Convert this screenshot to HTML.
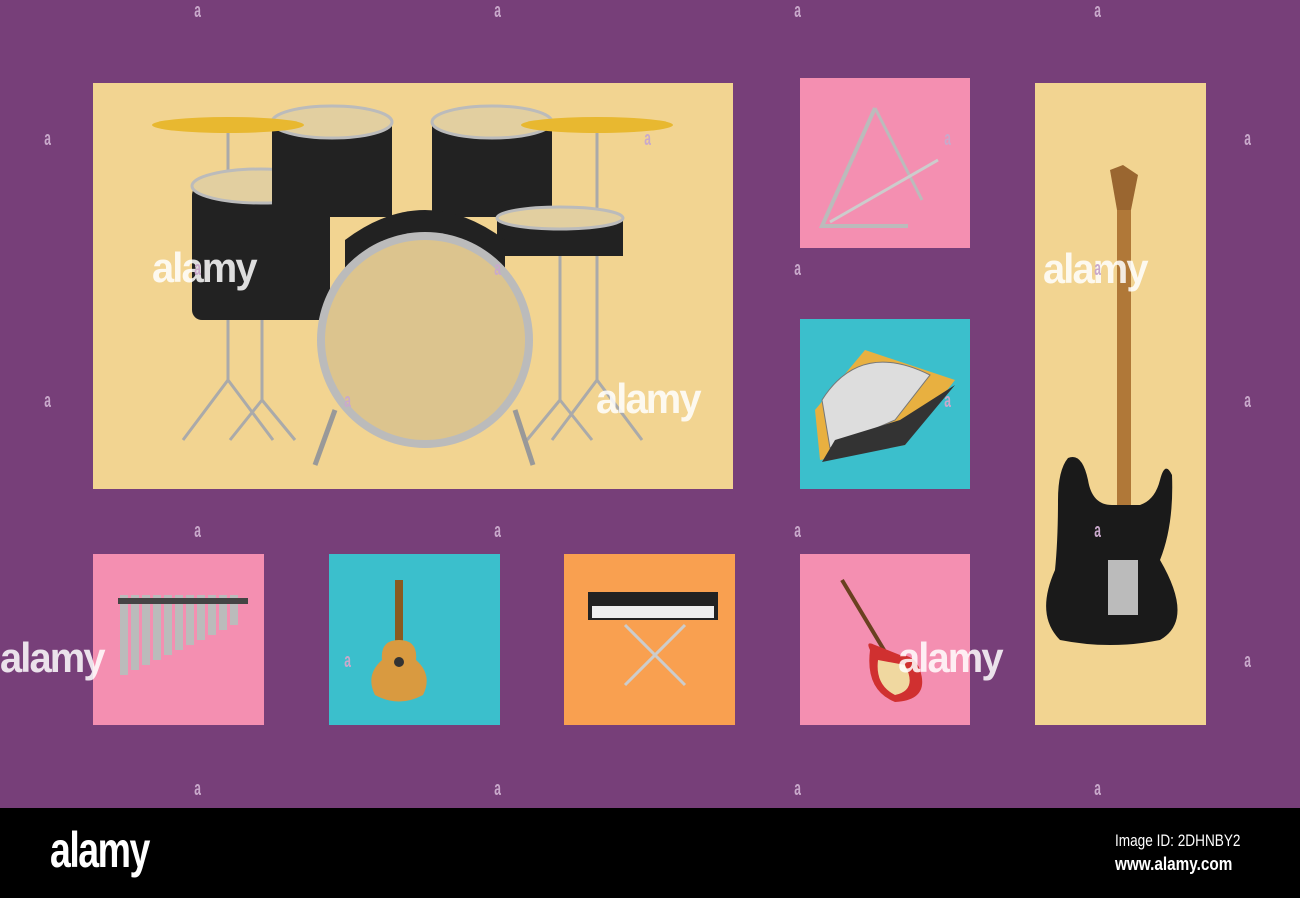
<!DOCTYPE html>
<html><head><meta charset="utf-8"><style>
*{margin:0;padding:0}
body{width:1300px;height:898px;background:#773f79;position:relative;overflow:hidden;font-family:"Liberation Sans",sans-serif}
.p{position:absolute}
.a{position:absolute;color:#c9a9cb;font:bold 20px "Liberation Sans",sans-serif;transform:scaleX(.6)}
.w{position:absolute;color:rgba(255,255,255,.85);font:bold 42px "Liberation Sans",sans-serif;transform:scaleX(.95);transform-origin:left;letter-spacing:-2px}
</style></head><body>
<div class="p" style="left:93px;top:83px;width:640px;height:406px;background:#f2d491"></div>
<div class="p" style="left:800px;top:78px;width:170px;height:170px;background:#f48fb1"></div>
<div class="p" style="left:800px;top:319px;width:170px;height:170px;background:#3bbfcc"></div>
<div class="p" style="left:1035px;top:83px;width:171px;height:642px;background:#f2d491"></div>
<div class="p" style="left:93px;top:554px;width:171px;height:171px;background:#f48fb1"></div>
<div class="p" style="left:329px;top:554px;width:171px;height:171px;background:#3bbfcc"></div>
<div class="p" style="left:564px;top:554px;width:171px;height:171px;background:#f9a050"></div>
<div class="p" style="left:800px;top:554px;width:170px;height:171px;background:#f48fb1"></div>
<svg class="p" style="left:0;top:0" width="1300" height="808">
<g stroke="#aaa" stroke-width="3" fill="none">
<line x1="228" y1="125" x2="228" y2="380"/><line x1="228" y1="380" x2="183" y2="440"/><line x1="228" y1="380" x2="273" y2="440"/>
<line x1="262" y1="320" x2="262" y2="400"/><line x1="262" y1="400" x2="230" y2="440"/><line x1="262" y1="400" x2="295" y2="440"/>
<line x1="597" y1="125" x2="597" y2="380"/><line x1="597" y1="380" x2="552" y2="440"/><line x1="597" y1="380" x2="642" y2="440"/>
<line x1="560" y1="255" x2="560" y2="400"/><line x1="560" y1="400" x2="527" y2="440"/><line x1="560" y1="400" x2="592" y2="440"/>
</g>
<rect x="192" y="185" width="138" height="135" rx="10" fill="#222"/><ellipse cx="261" cy="186" rx="69" ry="17" fill="#e2cfa0" stroke="#bbb" stroke-width="3"/>
<rect x="272" y="122" width="120" height="95" fill="#222"/><ellipse cx="332" cy="122" rx="60" ry="16" fill="#e2cfa0" stroke="#bbb" stroke-width="3"/>
<rect x="432" y="122" width="120" height="95" fill="#222"/><ellipse cx="492" cy="122" rx="60" ry="16" fill="#e2cfa0" stroke="#bbb" stroke-width="3"/>
<rect x="497" y="218" width="126" height="38" fill="#222"/><ellipse cx="560" cy="218" rx="63" ry="11" fill="#e2cfa0" stroke="#bbb" stroke-width="3"/>
<path d="M345 240 Q425 180 505 240 L505 300 L345 300Z" fill="#222"/>
<line x1="335" y1="410" x2="315" y2="465" stroke="#999" stroke-width="5"/><line x1="515" y1="410" x2="533" y2="465" stroke="#999" stroke-width="5"/>
<circle cx="425" cy="340" r="108" fill="#bbb"/><circle cx="425" cy="340" r="100" fill="#dcc48e"/>
<ellipse cx="228" cy="125" rx="76" ry="8" fill="#e8b830"/><ellipse cx="597" cy="125" rx="76" ry="8" fill="#e8b830"/>
<path d="M875 108 L822 226 L908 226" stroke="#bbb" stroke-width="4" fill="none"/><path d="M875 108 L922 200" stroke="#bbb" stroke-width="3"/>
<line x1="830" y1="222" x2="938" y2="160" stroke="#ccc" stroke-width="3"/>
<path d="M815 410 L865 350 L955 380 L905 445 L820 460Z" fill="#e8b040"/><path d="M822 400 Q860 340 930 375 L895 420 L830 448Z" fill="#ddd" stroke="#777"/>
<path d="M835 440 L900 420 L955 385 L905 445 L822 462Z" fill="#333"/>
<rect x="1117" y="200" width="14" height="370" fill="#b07838"/><path d="M1110 170 L1123 165 L1138 175 L1131 210 L1117 210Z" fill="#9a6630"/>
<path d="M1068 458 Q1082 452 1088 480 Q1092 505 1112 505 L1140 505 Q1155 500 1160 480 Q1165 460 1172 475 Q1174 525 1160 560 Q1195 620 1160 640 Q1110 650 1060 640 Q1035 615 1055 570 Q1058 540 1058 500 Q1058 470 1068 458Z" fill="#1a1a1a"/>
<rect x="1108" y="560" width="30" height="55" fill="#bbb"/>
<g fill="#bbb"><rect x="120" y="595" width="8" height="80"/><rect x="131" y="595" width="8" height="75"/><rect x="142" y="595" width="8" height="70"/><rect x="153" y="595" width="8" height="65"/><rect x="164" y="595" width="8" height="60"/><rect x="175" y="595" width="8" height="55"/><rect x="186" y="595" width="8" height="50"/><rect x="197" y="595" width="8" height="45"/><rect x="208" y="595" width="8" height="40"/><rect x="219" y="595" width="8" height="35"/><rect x="230" y="595" width="8" height="30"/></g>
<rect x="118" y="598" width="130" height="6" fill="#444"/>
<rect x="395" y="580" width="8" height="70" fill="#8a5a20"/>
<path d="M399 640 Q380 640 382 660 Q365 675 375 695 Q399 708 423 695 Q433 675 416 660 Q418 640 399 640Z" fill="#d99a40"/><circle cx="399" cy="662" r="5" fill="#333"/>
<rect x="588" y="592" width="130" height="28" fill="#222"/><rect x="592" y="606" width="122" height="12" fill="#eee"/>
<path d="M625 685 L685 625 M625 625 L685 685" stroke="#ccc" stroke-width="3"/>
<line x1="842" y1="580" x2="890" y2="660" stroke="#6a4020" stroke-width="4"/>
<path d="M870 650 Q865 640 875 645 L900 655 Q915 655 920 670 Q930 700 895 702 Q865 690 870 650Z" fill="#d03030"/><path d="M878 660 L905 665 Q918 690 895 695 Q875 685 878 660Z" fill="#f0d8a0"/>
</svg>
<div class="w" style="left:152px;top:244px">alamy</div>
<div class="w" style="left:596px;top:375px">alamy</div>
<div class="w" style="left:1043px;top:245px">alamy</div>
<div class="w" style="left:0;top:634px">alamy</div>
<div class="w" style="left:898px;top:634px">alamy</div>
<div class="a" style="left:192px;top:0">a</div><div class="a" style="left:492px;top:0">a</div><div class="a" style="left:792px;top:0">a</div><div class="a" style="left:1092px;top:0">a</div>
<div class="a" style="left:42px;top:128px">a</div><div class="a" style="left:642px;top:128px">a</div><div class="a" style="left:942px;top:128px">a</div><div class="a" style="left:1242px;top:128px">a</div>
<div class="a" style="left:192px;top:258px">a</div><div class="a" style="left:492px;top:258px">a</div><div class="a" style="left:792px;top:258px">a</div><div class="a" style="left:1092px;top:258px">a</div>
<div class="a" style="left:42px;top:390px">a</div><div class="a" style="left:342px;top:390px">a</div><div class="a" style="left:942px;top:390px">a</div><div class="a" style="left:1242px;top:390px">a</div>
<div class="a" style="left:192px;top:520px">a</div><div class="a" style="left:492px;top:520px">a</div><div class="a" style="left:792px;top:520px">a</div><div class="a" style="left:1092px;top:520px">a</div>
<div class="a" style="left:342px;top:650px">a</div><div class="a" style="left:1242px;top:650px">a</div>
<div class="a" style="left:192px;top:778px">a</div><div class="a" style="left:492px;top:778px">a</div><div class="a" style="left:792px;top:778px">a</div><div class="a" style="left:1092px;top:778px">a</div>
<div class="p" style="left:0;top:808px;width:1300px;height:90px;background:#000"></div>
<div class="p" style="left:50px;top:821px;color:#fff;font:bold 50px 'Liberation Sans',sans-serif;transform:scaleX(.75);transform-origin:left;letter-spacing:-2px">alamy</div>
<div class="p" style="left:1115px;top:831px;color:#fff;font:17px 'Liberation Sans',sans-serif;transform:scaleX(.8);transform-origin:left">Image ID: 2DHNBY2</div>
<div class="p" style="left:1115px;top:854px;color:#fff;font:bold 18px 'Liberation Sans',sans-serif;transform:scaleX(.85);transform-origin:left">www.alamy.com</div>
</body></html>
